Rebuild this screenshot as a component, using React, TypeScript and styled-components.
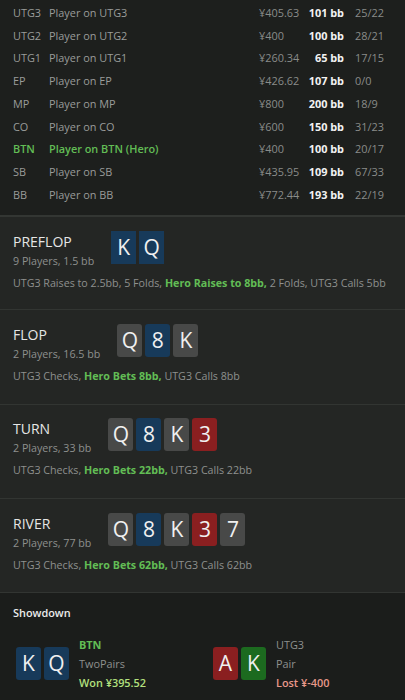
import React from 'react';
import styled, { createGlobalStyle } from 'styled-components';

const GlobalStyle = createGlobalStyle`
  html, body {
    margin: 0;
    padding: 0;
    background: #1b1d1b;
  }
  body {
    font-family: 'Open Sans', 'Liberation Sans', sans-serif;
    -webkit-font-smoothing: antialiased;
  }
`;

const GREEN = '#62bd55';

const Page = styled.div`
  width: 405px;
  height: 700px;
  overflow: hidden;
  background: #1b1d1b;
  color: #9b9d9b;
`;

const Table = styled.div`
  background: #1d1f1d;
  padding: 1px 0 9px;
  border-bottom: 2px solid #333633;
`;

const Row = styled.div<{ $hero?: boolean }>`
  display: grid;
  grid-template-columns: 36px 210px 46px 39px 11px 38px;
  padding: 0 12px 0 13px;
  height: 22.75px;
  align-items: center;
  font-size: 10.9px;
  white-space: nowrap;
  color: ${(p) => (p.$hero ? GREEN : '#9a9c9a')};
  font-weight: ${(p) => (p.$hero ? 600 : 400)};
`;

const Money = styled.span`
  color: #8a8c8a;
  font-weight: 400;
`;

const Stack = styled.span`
  color: #f2f2f2;
  font-weight: 700;
  text-align: right;
`;

const Ratio = styled.span`
  grid-column: 6;
  color: #8a8c8a;
  font-weight: 400;
`;

const Street = styled.section<{ $pt: number; $pb: number }>`
  background: #242624;
  padding: ${(p) => p.$pt}px 13px ${(p) => p.$pb}px;
  border-bottom: 1px solid #323532;
`;

const Header = styled.div`
  display: flex;
  align-items: flex-start;
  gap: 17px;
`;

const TitleBlock = styled.div`
  display: flex;
  flex-direction: column;
  white-space: nowrap;
`;

const Title = styled.div`
  font-size: 14px;
  line-height: 22px;
  color: #e6e6e6;
`;

const Sub = styled.div`
  font-size: 10.7px;
  line-height: 17px;
  color: #8e908e;
`;

const Cards = styled.div`
  display: flex;
  gap: 3px;
`;

const cardColors: Record<string, string> = {
  blue: '#173a5a',
  grey: '#484948',
  red: '#8a1f20',
  green: '#1c6a1f',
};

const Card = styled.div<{ $color: string; $square?: boolean }>`
  width: 25px;
  height: 33px;
  background: ${(p) => cardColors[p.$color]};
  border-radius: ${(p) => (p.$square ? 0 : 3)}px;
  color: #f0f0f0;
  font-size: 21px;
  line-height: 33px;
  text-align: center;
`;

const Actions = styled.div`
  margin-top: 5px;
  font-size: 10.7px;
  line-height: 16px;
  color: #8e908e;
  white-space: nowrap;
`;

const Hero = styled.span`
  color: ${GREEN};
  font-weight: 700;
`;

const Showdown = styled.section`
  background: #1b1d1b;
  padding: 11px 0 0 13px;
`;

const ShowTitle = styled.div`
  font-size: 10.9px;
  font-weight: 600;
  color: #ececec;
  line-height: 17px;
`;

const Hands = styled.div`
  display: grid;
  grid-template-columns: 197px 1fr;
  margin-top: 14px;
  padding-left: 3px;
`;

const Hand = styled.div`
  display: flex;
  align-items: center;
  gap: 10px;
`;

const Info = styled.div`
  display: flex;
  flex-direction: column;
  font-size: 10.9px;
  line-height: 19px;
  white-space: nowrap;
`;

const Seat = styled.div<{ $hero?: boolean }>`
  color: ${(p) => (p.$hero ? GREEN : '#8e908e')};
  font-weight: ${(p) => (p.$hero ? 700 : 400)};
`;

const Result = styled.div<{ $won?: boolean }>`
  color: ${(p) => (p.$won ? '#b3e07e' : '#e8988a')};
  font-weight: 600;
`;

const players = [
  ['UTG3', 'Player on UTG3', '¥405.63', '101 bb', '25/22'],
  ['UTG2', 'Player on UTG2', '¥400', '100 bb', '28/21'],
  ['UTG1', 'Player on UTG1', '¥260.34', '65 bb', '17/15'],
  ['EP', 'Player on EP', '¥426.62', '107 bb', '0/0'],
  ['MP', 'Player on MP', '¥800', '200 bb', '18/9'],
  ['CO', 'Player on CO', '¥600', '150 bb', '31/23'],
  ['BTN', 'Player on BTN (Hero)', '¥400', '100 bb', '20/17'],
  ['SB', 'Player on SB', '¥435.95', '109 bb', '67/33'],
  ['BB', 'Player on BB', '¥772.44', '193 bb', '22/19'],
];

type CardDef = [string, string];
const board: CardDef[] = [
  ['Q', 'grey'],
  ['8', 'blue'],
  ['K', 'grey'],
  ['3', 'red'],
  ['7', 'grey'],
];

const streets = [
  {
    name: 'PREFLOP',
    sub: '9 Players, 1.5 bb',
    cards: [['K', 'blue'], ['Q', 'blue']] as CardDef[],
    square: true,
    pre: 'UTG3 Raises to 2.5bb, 5 Folds, ',
    hero: 'Hero Raises to 8bb,',
    post: ' 2 Folds, UTG3 Calls 5bb',
    pt: 14,
    pb: 18,
  },
  {
    name: 'FLOP',
    sub: '2 Players, 16.5 bb',
    cards: board.slice(0, 3),
    pre: 'UTG3 Checks, ',
    hero: 'Hero Bets 8bb,',
    post: ' UTG3 Calls 8bb',
    pt: 14,
    pb: 20,
  },
  {
    name: 'TURN',
    sub: '2 Players, 33 bb',
    cards: board.slice(0, 4),
    pre: 'UTG3 Checks, ',
    hero: 'Hero Bets 22bb,',
    post: ' UTG3 Calls 22bb',
    pt: 13,
    pb: 20,
  },
  {
    name: 'RIVER',
    sub: '2 Players, 77 bb',
    cards: board,
    pre: 'UTG3 Checks, ',
    hero: 'Hero Bets 62bb,',
    post: ' UTG3 Calls 62bb',
    pt: 14,
    pb: 19,
  },
];

export default function App() {
  return (
    <Page>
      <GlobalStyle />
      <Table>
        {players.map(([pos, name, money, bb, ratio]) => (
          <Row key={pos} $hero={pos === 'BTN'}>
            <span>{pos}</span>
            <span>{name}</span>
            <Money>{money}</Money>
            <Stack>{bb}</Stack>
            <Ratio>{ratio}</Ratio>
          </Row>
        ))}
      </Table>

      {streets.map((s) => (
        <Street key={s.name} $pt={s.pt} $pb={s.pb}>
          <Header>
            <TitleBlock>
              <Title>{s.name}</Title>
              <Sub>{s.sub}</Sub>
            </TitleBlock>
            <Cards>
              {s.cards.map(([rank, color], i) => (
                <Card key={i} $color={color} $square={s.square}>
                  {rank}
                </Card>
              ))}
            </Cards>
          </Header>
          <Actions>
            {s.pre}
            <Hero>{s.hero}</Hero>
            {s.post}
          </Actions>
        </Street>
      ))}

      <Showdown>
        <ShowTitle>Showdown</ShowTitle>
        <Hands>
          <Hand>
            <Cards>
              <Card $color="blue">K</Card>
              <Card $color="blue">Q</Card>
            </Cards>
            <Info>
              <Seat $hero>BTN</Seat>
              <Seat>TwoPairs</Seat>
              <Result $won>Won ¥395.52</Result>
            </Info>
          </Hand>
          <Hand>
            <Cards>
              <Card $color="red">A</Card>
              <Card $color="green">K</Card>
            </Cards>
            <Info>
              <Seat>UTG3</Seat>
              <Seat>Pair</Seat>
              <Result>Lost ¥-400</Result>
            </Info>
          </Hand>
        </Hands>
      </Showdown>
    </Page>
  );
}
